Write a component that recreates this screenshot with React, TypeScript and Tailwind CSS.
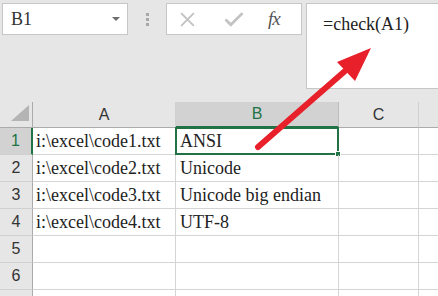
const rows = [
  ['i:\\excel\\code1.txt', 'ANSI'],
  ['i:\\excel\\code2.txt', 'Unicode'],
  ['i:\\excel\\code3.txt', 'Unicode big endian'],
  ['i:\\excel\\code4.txt', 'UTF-8'],
  ['', ''],
  ['', ''],
  ['', ''],
]

const serif = "font-['Liberation_Serif',serif]"
const sans = "font-['Liberation_Sans',sans-serif]"

export default function App() {
  return (
    <div className="relative w-[438px] h-[296px] overflow-hidden bg-[#e6e6e6]">
      {/* Formula bar */}
      <div className="flex items-start h-[102px]">
        <div className="ml-[2px] mt-[3px] w-[126px] h-[32px] border border-[#c6c6c6] bg-white flex items-center justify-between pl-[8px] pr-[7px]">
          <span className={`${serif} text-[18px] text-[#333]`}>B1</span>
          <span className="w-0 h-0 border-l-[4px] border-r-[4px] border-t-[4px] border-l-transparent border-r-transparent border-t-[#6e6e6e]" />
        </div>
        <div className="w-[38px] h-[38px] flex flex-col items-center justify-center gap-[2px] pl-[1px]">
          <span className="w-[3px] h-[3px] bg-[#a8a8a8]" />
          <span className="w-[3px] h-[3px] bg-[#a8a8a8]" />
          <span className="w-[3px] h-[3px] bg-[#a8a8a8]" />
        </div>
        <div className="mt-[3px] w-[136px] h-[32px] border border-[#c6c6c6] bg-white flex items-center">
          <svg width="17" height="17" viewBox="0 0 16 16" className="ml-[12px]">
            <path d="M2 2 L14 14 M14 2 L2 14" stroke="#c2c2c2" strokeWidth="1.7" />
          </svg>
          <svg width="22" height="17" viewBox="0 0 20 16" className="ml-[27px]">
            <path d="M2 8 L7 13 L18 2" stroke="#c2c2c2" strokeWidth="2.6" fill="none" />
          </svg>
          <span className={`ml-[23px] ${serif} italic text-[19px] text-[#555] tracking-[-1px]`}>fx</span>
        </div>
        <div className="ml-[4px] mt-[3px] flex-1 h-[86px] border border-r-0 border-[#c6c6c6] bg-white pl-[16px] pt-[8px]">
          <span className={`${serif} text-[18px] leading-[20px] text-[#222]`}>=check(A1)</span>
        </div>
      </div>

      {/* Sheet */}
      <div className="grid grid-cols-[33px_143px_163px_80px_1fr] grid-rows-[26px] auto-rows-[27px] bg-white">
        <div className="relative bg-[#e6e6e6] border-r border-b border-[#ababab]">
          <svg width="18" height="16" viewBox="0 0 18 16" className="absolute left-[11px] top-[3px]">
            <path d="M18 0 L18 16 L0 16 Z" fill="#b4b4b4" />
          </svg>
        </div>
        <div className={`bg-[#e6e6e6] border-r border-b border-r-[#d0d0d0] border-b-[#ababab] flex items-center justify-center ${sans} text-[16px] text-[#333]`}>A</div>
        <div className={`bg-[#d2d2d2] border-r border-r-[#bdbdbd] border-b-2 border-b-[#217346] flex items-center justify-center ${sans} text-[16px] text-[#217346]`}>B</div>
        <div className={`bg-[#e6e6e6] border-r border-b border-r-[#d0d0d0] border-b-[#ababab] flex items-center justify-center ${sans} text-[16px] text-[#333]`}>C</div>
        <div className="bg-[#e6e6e6] border-b border-[#ababab]" />

        {rows.map((r, i) => (
          <Row key={i} n={i + 1} a={r[0]} b={r[1]} />
        ))}
      </div>

      {/* Arrow annotation */}
      <svg className="absolute left-0 top-0 pointer-events-none" width="438" height="296" viewBox="0 0 438 296">
        <line x1="258" y1="147" x2="345" y2="71" stroke="#e8202a" strokeWidth="6" strokeLinecap="round" />
        <path d="M371 48 L337 62 L355 81 Z" fill="#e8202a" />
      </svg>
    </div>
  )
}

function Row({ n, a, b }: { n: number; a: string; b: string }) {
  const selected = n === 1
  return (
    <>
      <div
        className={`flex items-center justify-center ${sans} text-[16px] border-b border-b-[#d0d0d0] ${
          selected
            ? 'bg-[#d2d2d2] text-[#217346] border-r-2 border-r-[#217346]'
            : 'bg-[#e6e6e6] text-[#333] border-r border-r-[#ababab]'
        }`}
      >
        {n < 7 ? n : ''}
      </div>
      <div className={`border-r border-b border-[#d4d4d4] pl-[3px] flex items-center ${serif} text-[18px] text-[#222] whitespace-nowrap`}>
        {a}
      </div>
      <div className={`relative border-r border-b border-[#d4d4d4] pl-[4px] flex items-center ${serif} text-[18px] text-[#222] whitespace-nowrap`}>
        {b}
        {selected && (
          <>
            <div className="absolute -left-[1px] -top-[1px] -right-[1px] -bottom-[1px] border-2 border-[#217346]" />
            <div className="absolute -right-[3px] -bottom-[3px] w-[6px] h-[6px] bg-[#217346] border border-white" />
          </>
        )}
      </div>
      <div className="border-r border-b border-[#d4d4d4]" />
      <div className="border-b border-[#d4d4d4]" />
    </>
  )
}
